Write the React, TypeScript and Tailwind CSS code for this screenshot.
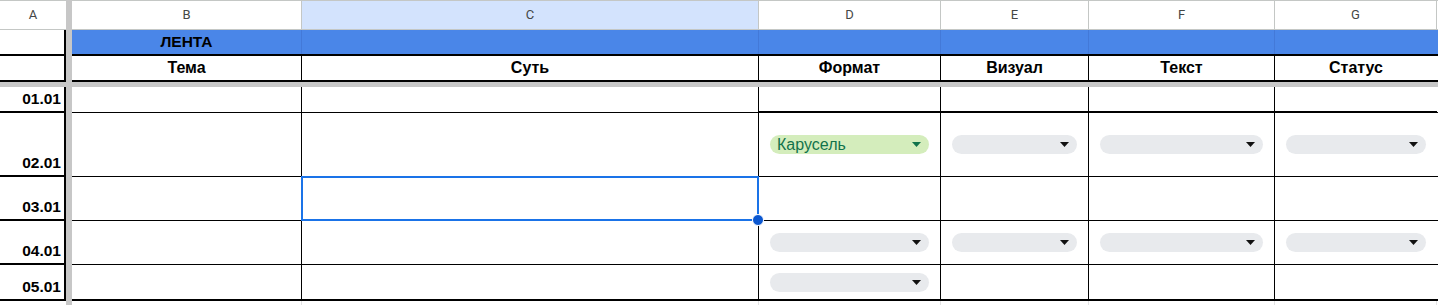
import React from 'react';

const font = "font-['Liberation_Sans',Arial,sans-serif]";

type Col = { key: string; w: string; last?: boolean };

const cols: Col[] = [
    { key: 'B', w: 'w-[230px]' },
    { key: 'C', w: 'w-[457px]' },
    { key: 'D', w: 'w-[182px]' },
    { key: 'E', w: 'w-[148px]' },
    { key: 'F', w: 'w-[186px]' },
    { key: 'G', w: 'w-[162px]', last: true },
];

const titles: Record<string, string> = {
    B: 'Тема',
    C: 'Суть',
    D: 'Формат',
    E: 'Визуал',
    F: 'Текст',
    G: 'Статус',
};

// which dropdown sits in which cell: row index -> column -> kind
const chips: Record<number, Record<string, 'green' | 'gray'>> = {
    1: { D: 'green', E: 'gray', F: 'gray', G: 'gray' },
    3: { D: 'gray', E: 'gray', F: 'gray', G: 'gray' },
    4: { D: 'gray' },
};

const rows = [
    { date: '01.01', h: 'h-[26px]' },
    { date: '02.01', h: 'h-[64px]' },
    { date: '03.01', h: 'h-[44px]' },
    { date: '04.01', h: 'h-[44px]' },
    { date: '05.01', h: 'h-[36px]' },
];

const FrozenBar = () => <div className="w-[6px] shrink-0 self-stretch bg-[#c7c7c7]" />;

const Chip = ({ kind }: { kind: 'green' | 'gray' }) => {
    const green = kind === 'green';
    return (
        <div
            className={`flex h-[19px] w-full items-center justify-between rounded-full pl-[7px] pr-[8px] ${
                green ? 'bg-[#d4edbc]' : 'bg-[#e8eaed]'
            }`}
        >
            <span className={`text-[16px] leading-none text-[#11734b] ${font}`}>{green ? 'Карусель' : ''}</span>
            <svg width="9" height="5" viewBox="0 0 9 5" className="shrink-0">
                <polygon points="0,0 9,0 4.5,5" fill={green ? '#11734b' : '#111111'} />
            </svg>
        </div>
    );
};

export default function App() {
    return (
        <div className={`h-[305px] w-[1438px] overflow-hidden bg-white ${font}`}>
            {/* column letters */}
            <div className="flex h-[30px]">
                <div className="flex w-[66px] shrink-0 items-center justify-center border-y border-[#c4c7c5] font-['Roboto',sans-serif] text-[13px] text-[#444746]">
                    A
                </div>
                <FrozenBar />
                {cols.map((c) => (
                    <div
                        key={c.key}
                        className={`flex ${c.w} shrink-0 items-center justify-center border-y border-r border-[#c4c7c5] font-['Roboto',sans-serif] text-[13px] text-[#444746] ${
                            c.key === 'C' ? 'bg-[#d3e3fd] text-[#0b57d0]' : ''
                        }`}
                    >
                        {c.key}
                    </div>
                ))}
                <div className="flex-1 border-y border-[#c4c7c5]" />
            </div>

            {/* ЛЕНТА */}
            <div className="flex h-[24px]">
                <div className="w-[66px] shrink-0 border-r-2 border-black" />
                <FrozenBar />
                {cols.map((c) => (
                    <div
                        key={c.key}
                        className={`flex ${c.w} shrink-0 items-center justify-center bg-[#4a86e8] ${
                            c.last ? '' : 'border-r border-[#4379d8]'
                        } text-[15.5px] font-bold text-black`}
                    >
                        {c.key === 'B' ? 'ЛЕНТА' : ''}
                    </div>
                ))}
                <div className="flex-1 bg-[#4a86e8]" />
            </div>

            {/* titles */}
            <div className="flex h-[28px]">
                <div className="w-[66px] shrink-0 border-y-2 border-r-2 border-black" />
                <FrozenBar />
                {cols.map((c) => (
                    <div
                        key={c.key}
                        className={`flex ${c.w} shrink-0 items-center justify-center border-y-2 border-black ${
                            c.last ? '' : 'border-r'
                        } text-[16px] font-bold text-black`}
                    >
                        {titles[c.key]}
                    </div>
                ))}
                <div className="flex-1 border-y-2 border-black" />
            </div>

            <div className="h-[5px] bg-[#c7c7c7]" />

            {rows.map((r, i) => {
                const lastRow = i === rows.length - 1;
                return (
                    <div key={r.date} className={`flex ${r.h}`}>
                        <div className="flex w-[66px] shrink-0 items-end justify-end border-b-2 border-r-2 border-black pb-[1px] pr-[3px] text-[15.5px] font-bold text-black">
                            {r.date}
                        </div>
                        <FrozenBar />
                        {cols.map((c) => {
                            const kind = chips[i]?.[c.key];
                            const thick = lastRow || (i === 0 && ['D', 'E', 'F', 'G'].includes(c.key));
                            return (
                                <div
                                    key={c.key}
                                    className={`relative flex ${c.w} shrink-0 items-center px-[11px] border-black ${
                                        thick ? 'border-b-2' : 'border-b'
                                    } ${c.last ? '' : 'border-r'}`}
                                >
                                    {kind && <Chip kind={kind} />}
                                    {i === 2 && c.key === 'C' && (
                                        <div className="absolute -left-px -top-px -right-px -bottom-px z-10 border-2 border-[#1a73e8]">
                                            <div className="absolute -bottom-[7px] -right-[7px] h-[12px] w-[12px] rounded-full border border-white bg-[#0b57d0]" />
                                        </div>
                                    )}
                                </div>
                            );
                        })}
                        <div className={`flex-1 border-black ${lastRow ? 'border-b-2' : 'border-b'}`} />
                    </div>
                );
            })}

            {/* rest of the grid below */}
            <div className="flex h-[5px]">
                <div className="w-[66px] shrink-0" />
                <FrozenBar />
                {cols.map((c) => (
                    <div key={c.key} className={`${c.w} shrink-0 border-r border-[#e2e2e3]`} />
                ))}
            </div>
        </div>
    );
}
